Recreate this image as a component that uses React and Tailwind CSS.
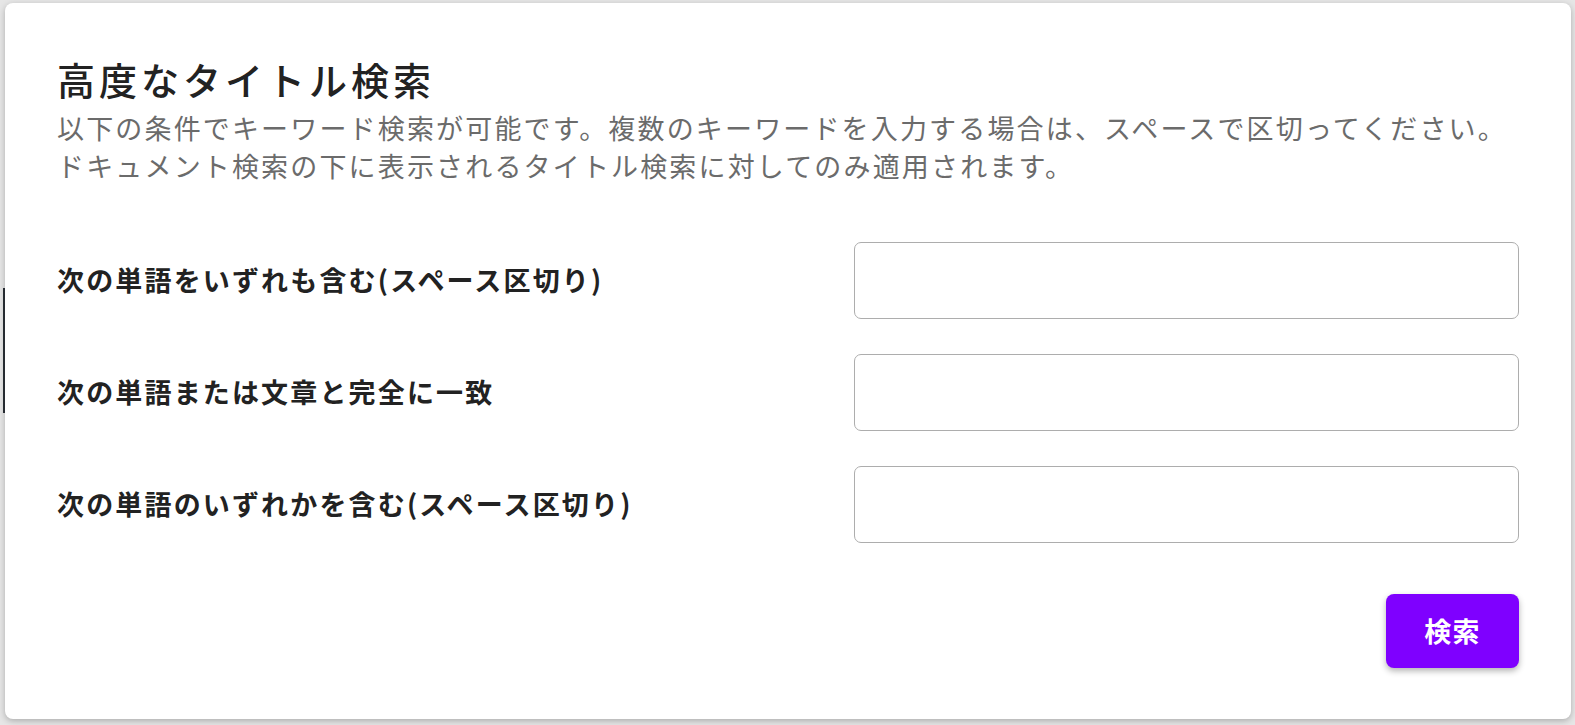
import React from 'react';

const fields = [
  '次の単語をいずれも含む(スペース区切り)',
  '次の単語または文章と完全に一致',
  '次の単語のいずれかを含む(スペース区切り)',
];

export default function App() {
  return (
    <div
      className="relative w-[1575px] h-[725px] bg-[#e6e6e6] pt-[3px] pl-[5px] overflow-hidden font-['Noto_Sans_CJK_JP',sans-serif]"
    >
      {/* element behind the dialog */}
      <div className="absolute left-[3px] top-[288px] w-[2px] h-[125px] bg-[#2a2f36]" />

      <div className="relative w-[1566px] h-[716px] bg-white rounded-[8px] shadow-[0_2px_6px_rgba(0,0,0,0.25)] px-[52px] pt-[52px]">
        <h1 className="text-[38px] leading-[48px] font-medium text-[#222] tracking-[0.105em]">
          高度なタイトル検索
        </h1>
        <p className="mt-[6px] text-[27px] leading-[38px] text-[#6b6b6b] tracking-[0.08em]">
          以下の条件でキーワード検索が可能です。複数のキーワードを入力する場合は、スペースで区切ってください。
          <br />
          ドキュメント検索の下に表示されるタイトル検索に対してのみ適用されます。
        </p>

        <div className="mt-[57px] flex flex-col gap-[35px]">
          {fields.map((label) => (
            <div key={label} className="flex items-center">
              <label className="w-[798px] text-[27px] font-bold text-[#222] tracking-[0.08em]">
                {label}
              </label>
              <input
                type="text"
                className="w-[666px] h-[77px] rounded-[7px] border-[1.5px] border-[#adadad] bg-white px-4 text-[24px] outline-none"
              />
            </div>
          ))}
        </div>

        <div className="mt-[51px] flex justify-end">
          <button className="w-[133px] h-[74px] rounded-[8px] bg-[#7f00ff] text-white text-[27px] font-bold tracking-[0.05em] shadow-[0_3px_6px_rgba(0,0,0,0.3)]">
            検索
          </button>
        </div>
      </div>
    </div>
  );
}
